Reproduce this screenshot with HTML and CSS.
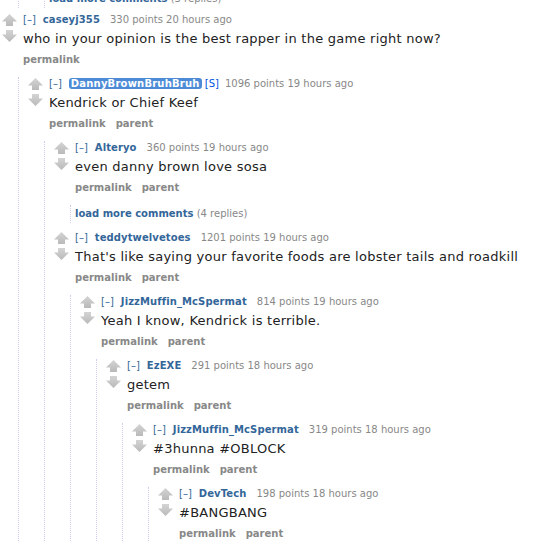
FILE: index.html
```html
<!DOCTYPE html>
<html>
<head>
<meta charset="utf-8">
<link rel="stylesheet" href="styles.css">
</head>
<body>
<div class="page">
  <svg class="defs" width="0" height="0"><defs><linearGradient id="g" x1="0" y1="0" x2="0" y2="1"><stop offset="0" stop-color="#d4d4d4"/><stop offset="1" stop-color="#b9b9b9"/></linearGradient></defs></svg>
  <div class="prev">
    <div class="child first">
      <div class="inner">
        <div class="child first">
          <div class="more"><span class="ml">load more comments</span> <span class="gray">(3 replies)</span></div>
        </div>
      </div>
    </div>
  </div>

  <div class="comment">
    <div class="row">
      <div class="midcol"><svg width="15" height="28" viewBox="0 0 15 28"><polygon points="7.5,0 15,7.5 11,7.5 11,12 4,12 4,7.5 0,7.5" fill="url(#g)"/><polygon points="4,16 11,16 11,20.5 15,20.5 7.5,28 0,20.5 4,20.5" fill="url(#g)"/></svg></div>
      <div class="entry">
        <p class="tagline"><span class="expand">[–]</span><span class="author">caseyj355</span><span class="score">330 points</span> 20 hours ago</p>
        <div class="md">who in your opinion is the best rapper in the game right now?</div>
        <ul class="buttons"><li>permalink</li></ul>
      </div>
    </div>
    <div class="child">
      <div class="comment">
        <div class="row">
          <div class="midcol"><svg width="15" height="28" viewBox="0 0 15 28"><polygon points="7.5,0 15,7.5 11,7.5 11,12 4,12 4,7.5 0,7.5" fill="url(#g)"/><polygon points="4,16 11,16 11,20.5 15,20.5 7.5,28 0,20.5 4,20.5" fill="url(#g)"/></svg></div>
          <div class="entry">
            <p class="tagline"><span class="expand">[–]</span><span class="author submitter">DannyBrownBruhBruh</span> <span class="flair">[S]</span><span class="score sm">1096 points</span> 19 hours ago</p>
            <div class="md">Kendrick or Chief Keef</div>
            <ul class="buttons"><li>permalink</li><li>parent</li></ul>
          </div>
        </div>
        <div class="child">
          <div class="comment">
            <div class="row">
              <div class="midcol"><svg width="15" height="28" viewBox="0 0 15 28"><polygon points="7.5,0 15,7.5 11,7.5 11,12 4,12 4,7.5 0,7.5" fill="url(#g)"/><polygon points="4,16 11,16 11,20.5 15,20.5 7.5,28 0,20.5 4,20.5" fill="url(#g)"/></svg></div>
              <div class="entry">
                <p class="tagline"><span class="expand">[–]</span><span class="author">Alteryo</span><span class="score">360 points</span> 19 hours ago</p>
                <div class="md">even danny brown love sosa</div>
                <ul class="buttons"><li>permalink</li><li>parent</li></ul>
              </div>
            </div>
            <div class="child">
              <div class="more"><span class="ml">load more comments</span> <span class="gray">(4 replies)</span></div>
            </div>
          </div>

          <div class="comment">
            <div class="row">
              <div class="midcol"><svg width="15" height="28" viewBox="0 0 15 28"><polygon points="7.5,0 15,7.5 11,7.5 11,12 4,12 4,7.5 0,7.5" fill="url(#g)"/><polygon points="4,16 11,16 11,20.5 15,20.5 7.5,28 0,20.5 4,20.5" fill="url(#g)"/></svg></div>
              <div class="entry">
                <p class="tagline"><span class="expand">[–]</span><span class="author">teddytwelvetoes</span><span class="score">1201 points</span> 19 hours ago</p>
                <div class="md">That's like saying your favorite foods are lobster tails and roadkill</div>
                <ul class="buttons"><li>permalink</li><li>parent</li></ul>
              </div>
            </div>
            <div class="child">
              <div class="comment">
                <div class="row">
                  <div class="midcol"><svg width="15" height="28" viewBox="0 0 15 28"><polygon points="7.5,0 15,7.5 11,7.5 11,12 4,12 4,7.5 0,7.5" fill="url(#g)"/><polygon points="4,16 11,16 11,20.5 15,20.5 7.5,28 0,20.5 4,20.5" fill="url(#g)"/></svg></div>
                  <div class="entry">
                    <p class="tagline"><span class="expand">[–]</span><span class="author">JizzMuffin_McSpermat</span><span class="score">814 points</span> 19 hours ago</p>
                    <div class="md">Yeah I know, Kendrick is terrible.</div>
                    <ul class="buttons"><li>permalink</li><li>parent</li></ul>
                  </div>
                </div>
                <div class="child">
                  <div class="comment">
                    <div class="row">
                      <div class="midcol"><svg width="15" height="28" viewBox="0 0 15 28"><polygon points="7.5,0 15,7.5 11,7.5 11,12 4,12 4,7.5 0,7.5" fill="url(#g)"/><polygon points="4,16 11,16 11,20.5 15,20.5 7.5,28 0,20.5 4,20.5" fill="url(#g)"/></svg></div>
                      <div class="entry">
                        <p class="tagline"><span class="expand">[–]</span><span class="author">EzEXE</span><span class="score">291 points</span> 18 hours ago</p>
                        <div class="md">getem</div>
                        <ul class="buttons"><li>permalink</li><li>parent</li></ul>
                      </div>
                    </div>
                    <div class="child">
                      <div class="comment">
                        <div class="row">
                          <div class="midcol"><svg width="15" height="28" viewBox="0 0 15 28"><polygon points="7.5,0 15,7.5 11,7.5 11,12 4,12 4,7.5 0,7.5" fill="url(#g)"/><polygon points="4,16 11,16 11,20.5 15,20.5 7.5,28 0,20.5 4,20.5" fill="url(#g)"/></svg></div>
                          <div class="entry">
                            <p class="tagline"><span class="expand">[–]</span><span class="author">JizzMuffin_McSpermat</span><span class="score">319 points</span> 18 hours ago</p>
                            <div class="md">#3hunna #OBLOCK</div>
                            <ul class="buttons"><li>permalink</li><li>parent</li></ul>
                          </div>
                        </div>
                        <div class="child">
                          <div class="comment">
                            <div class="row">
                              <div class="midcol"><svg width="15" height="28" viewBox="0 0 15 28"><polygon points="7.5,0 15,7.5 11,7.5 11,12 4,12 4,7.5 0,7.5" fill="url(#g)"/><polygon points="4,16 11,16 11,20.5 15,20.5 7.5,28 0,20.5 4,20.5" fill="url(#g)"/></svg></div>
                              <div class="entry">
                                <p class="tagline"><span class="expand">[–]</span><span class="author">DevTech</span><span class="score">198 points</span> 18 hours ago</p>
                                <div class="md">#BANGBANG</div>
                                <ul class="buttons"><li>permalink</li><li>parent</li></ul>
                              </div>
                            </div>
                          </div>
                        </div>
                      </div>
                    </div>
                  </div>
                </div>
              </div>
            </div>
          </div>
        </div>
      </div>
    </div>
  </div>
</div>
</body>
</html>
```

FILE: styles.css
```css
html, body {
  margin: 0;
  padding: 0;
  background: #fff;
}
.page {
  font-family: "DejaVu Sans", Verdana, sans-serif;
  padding-left: 2px;
  overflow: hidden;
  height: 544px;
}
.defs {
  display: block;
  width: 0;
  height: 0;
}
.prev {
  margin-top: -10px;
  margin-bottom: 5px;
}
.prev .inner {
  margin-left: 9px;
}
.comment {
  margin-left: 0;
}
.child .comment {
  margin-left: 9px;
}
.row {
  display: flex;
}
.midcol {
  width: 15px;
  margin-right: 6px;
  padding-top: 1px;
  flex: none;
}
.midcol svg {
  display: block;
}
.entry {
  flex: 1;
  min-width: 0;
}
.tagline {
  margin: 0;
  font-size: 10px;
  line-height: 13px;
  color: #888;
  white-space: nowrap;
}
.expand {
  color: #369;
  margin-right: 7px;
}
.author {
  color: #369;
  font-weight: bold;
  letter-spacing: 0.1px;
}
.submitter {
  background: #4d8bd6;
  color: #fff;
  border-radius: 3px;
  padding: 0 2px;
  letter-spacing: 0.2px;
}
.flair {
  color: #0055df;
}
.score {
  margin-left: 10px;
}
.score.sm {
  margin-left: 6px;
}
.md {
  margin-top: 5px;
  font-size: 13px;
  line-height: 16px;
  color: #222;
  letter-spacing: 0.25px;
  white-space: nowrap;
}
.buttons {
  list-style: none;
  margin: 6px 0 0;
  padding: 0;
  display: flex;
  gap: 10px;
  font-size: 10px;
  line-height: 14px;
  font-weight: bold;
  color: #888;
}
.child {
  margin-top: 10px;
  margin-left: 16px;
  border-left: 1px dotted #cdcdf0;
}
.child.first {
  margin-top: 0;
}
.more {
  padding-left: 4px;
  font-size: 10px;
  line-height: 18px;
  margin-bottom: 8px;
}
.prev .more {
  margin-bottom: 0;
}
.ml {
  color: #369;
  font-weight: bold;
}
.gray {
  color: #888;
}
```
